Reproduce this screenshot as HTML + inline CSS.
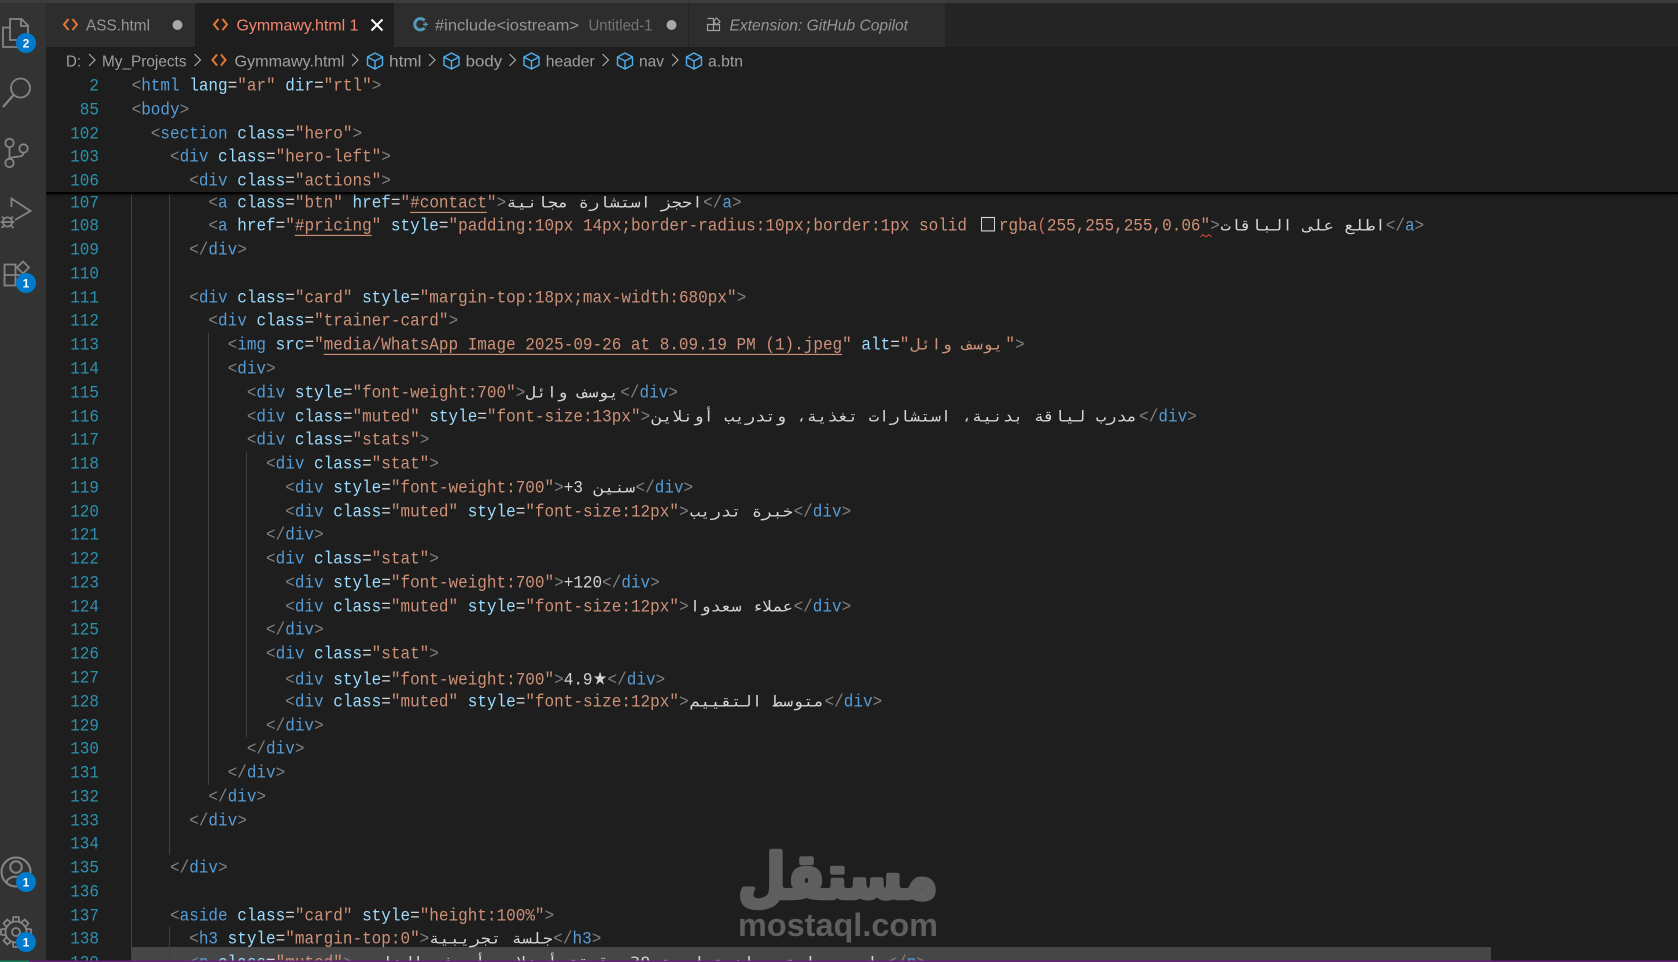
<!DOCTYPE html>
<html><head><meta charset="utf-8"><style>
html,body{margin:0;padding:0;background:#1e1e1e}
#app{position:relative;width:1678px;height:962px;overflow:hidden;background:#1e1e1e}
.l,.n{position:absolute;margin-top:1.6px;height:23.76px;line-height:23.76px;font:16px/23.76px "Liberation Mono","DejaVu Sans Mono",monospace;white-space:pre;transform:scaleY(1.12);transform-origin:50% 50%}
.l{left:131.6px;color:#d4d4d4}
.n{left:46px;width:53px;text-align:right;color:#2b91af}
.l i{font-style:normal;color:#569cd6}
.l b{font-weight:400;color:#9cdcfe}
.l s{text-decoration:none;color:#ce9178}
.l em{font-style:normal;color:#808080}
.l u{color:#ce9178;text-decoration:underline;text-decoration-thickness:1px;text-underline-offset:3.5px}
.ar{display:inline-block;direction:rtl;unicode-bidi:isolate;text-align:center;white-space:pre;font-family:"DejaVu Sans Mono","DejaVu Sans",sans-serif;font-size:13.5px;transform:scaleX(1.27)}
.star{display:inline-block;width:15px;text-align:center;font-family:"DejaVu Sans",sans-serif}
.g{position:absolute;width:1px;background:#404040}
#sticky{position:absolute;left:46px;top:47px;right:0;height:145px;background:#1e1e1e;border-bottom:2px solid #000;box-shadow:0 1px 2px #0008}
svg text{font-family:"Liberation Sans",sans-serif}
.swatch{display:inline-block;box-sizing:border-box;width:14px;height:13px;border:1px solid #d4d4d4;background:#262626;margin:0 3.7px 0 14.2px;vertical-align:-1px}
</style></head><body><div id="app">

<div style="position:absolute;left:131px;top:947px;width:1360px;height:15px;background:#464646"></div>
<div class="g" style="left:131px;top:193px;height:769px"></div>
<div class="g" style="left:169px;top:193px;height:662px"></div>
<div class="g" style="left:169px;top:927px;height:35px"></div>
<div class="g" style="left:208px;top:333px;height:452px"></div>
<div class="g" style="left:246px;top:452px;height:285px"></div>

<div class="n" style="top:190.1px">107</div><div class="l" style="top:190.1px">        <em>&lt;</em><i>a</i> <b>class</b>=<s>"btn"</s> <b>href</b>=<s>"<u>#contact</u>"</s><em>&gt;</em><span class="ar" style="width:197px">احجز استشارة مجانية</span><em>&lt;/</em><i>a</i><em>&gt;</em></div>
<div class="n" style="top:213.9px">108</div><div class="l" style="top:213.9px">        <em>&lt;</em><i>a</i> <b>href</b>=<s>"<u>#pricing</u>"</s> <b>style</b>=<s>"padding:10px 14px;border-radius:10px;border:1px solid</s><span class="swatch"></span><s>rgba</s><s style="color:#d16a5c">(</s><s>255,255,255,0.06"</s><em>&gt;</em><span class="ar" style="width:166px">اطلع على الباقات</span><em>&lt;/</em><i>a</i><em>&gt;</em></div>
<div class="n" style="top:237.6px">109</div><div class="l" style="top:237.6px">      <em>&lt;/</em><i>div</i><em>&gt;</em></div>
<div class="n" style="top:261.4px">110</div>
<div class="n" style="top:285.2px">111</div><div class="l" style="top:285.2px">      <em>&lt;</em><i>div</i> <b>class</b>=<s>"card"</s> <b>style</b>=<s>"margin-top:18px;max-width:680px"</s><em>&gt;</em></div>
<div class="n" style="top:308.9px">112</div><div class="l" style="top:308.9px">        <em>&lt;</em><i>div</i> <b>class</b>=<s>"trainer-card"</s><em>&gt;</em></div>
<div class="n" style="top:332.7px">113</div><div class="l" style="top:332.7px">          <em>&lt;</em><i>img</i> <b>src</b>=<s>"<u>media/WhatsApp Image 2025-09-26 at 8.09.19 PM (1).jpeg</u>"</s> <b>alt</b>=<s>"<span class="ar" style="width:96px">يوسف وائل</span>"</s><em>&gt;</em></div>
<div class="n" style="top:356.5px">114</div><div class="l" style="top:356.5px">          <em>&lt;</em><i>div</i><em>&gt;</em></div>
<div class="n" style="top:380.2px">115</div><div class="l" style="top:380.2px">            <em>&lt;</em><i>div</i> <b>style</b>=<s>"font-weight:700"</s><em>&gt;</em><span class="ar" style="width:95px">يوسف وائل</span><em>&lt;/</em><i>div</i><em>&gt;</em></div>
<div class="n" style="top:404px">116</div><div class="l" style="top:404px">            <em>&lt;</em><i>div</i> <b>class</b>=<s>"muted"</s> <b>style</b>=<s>"font-size:13px"</s><em>&gt;</em><span class="ar" style="width:489px">مدرب لياقة بدنية، استشارات تغذية، وتدريب أونلاين</span><em>&lt;/</em><i>div</i><em>&gt;</em></div>
<div class="n" style="top:427.8px">117</div><div class="l" style="top:427.8px">            <em>&lt;</em><i>div</i> <b>class</b>=<s>"stats"</s><em>&gt;</em></div>
<div class="n" style="top:451.5px">118</div><div class="l" style="top:451.5px">              <em>&lt;</em><i>div</i> <b>class</b>=<s>"stat"</s><em>&gt;</em></div>
<div class="n" style="top:475.3px">119</div><div class="l" style="top:475.3px">                <em>&lt;</em><i>div</i> <b>style</b>=<s>"font-weight:700"</s><em>&gt;</em>+3 <span class="ar" style="width:43px">سنين</span><em>&lt;/</em><i>div</i><em>&gt;</em></div>
<div class="n" style="top:499.1px">120</div><div class="l" style="top:499.1px">                <em>&lt;</em><i>div</i> <b>class</b>=<s>"muted"</s> <b>style</b>=<s>"font-size:12px"</s><em>&gt;</em><span class="ar" style="width:105px">خبرة تدريب</span><em>&lt;/</em><i>div</i><em>&gt;</em></div>
<div class="n" style="top:522.8px">121</div><div class="l" style="top:522.8px">              <em>&lt;/</em><i>div</i><em>&gt;</em></div>
<div class="n" style="top:546.6px">122</div><div class="l" style="top:546.6px">              <em>&lt;</em><i>div</i> <b>class</b>=<s>"stat"</s><em>&gt;</em></div>
<div class="n" style="top:570.4px">123</div><div class="l" style="top:570.4px">                <em>&lt;</em><i>div</i> <b>style</b>=<s>"font-weight:700"</s><em>&gt;</em>+120<em>&lt;/</em><i>div</i><em>&gt;</em></div>
<div class="n" style="top:594.1px">124</div><div class="l" style="top:594.1px">                <em>&lt;</em><i>div</i> <b>class</b>=<s>"muted"</s> <b>style</b>=<s>"font-size:12px"</s><em>&gt;</em><span class="ar" style="width:105px">عملاء سعدوا</span><em>&lt;/</em><i>div</i><em>&gt;</em></div>
<div class="n" style="top:617.9px">125</div><div class="l" style="top:617.9px">              <em>&lt;/</em><i>div</i><em>&gt;</em></div>
<div class="n" style="top:641.7px">126</div><div class="l" style="top:641.7px">              <em>&lt;</em><i>div</i> <b>class</b>=<s>"stat"</s><em>&gt;</em></div>
<div class="n" style="top:665.4px">127</div><div class="l" style="top:665.4px">                <em>&lt;</em><i>div</i> <b>style</b>=<s>"font-weight:700"</s><em>&gt;</em>4.9<span class="star">★</span><em>&lt;/</em><i>div</i><em>&gt;</em></div>
<div class="n" style="top:689.2px">128</div><div class="l" style="top:689.2px">                <em>&lt;</em><i>div</i> <b>class</b>=<s>"muted"</s> <b>style</b>=<s>"font-size:12px"</s><em>&gt;</em><span class="ar" style="width:136px">متوسط التقييم</span><em>&lt;/</em><i>div</i><em>&gt;</em></div>
<div class="n" style="top:713px">129</div><div class="l" style="top:713px">              <em>&lt;/</em><i>div</i><em>&gt;</em></div>
<div class="n" style="top:736.7px">130</div><div class="l" style="top:736.7px">            <em>&lt;/</em><i>div</i><em>&gt;</em></div>
<div class="n" style="top:760.5px">131</div><div class="l" style="top:760.5px">          <em>&lt;/</em><i>div</i><em>&gt;</em></div>
<div class="n" style="top:784.3px">132</div><div class="l" style="top:784.3px">        <em>&lt;/</em><i>div</i><em>&gt;</em></div>
<div class="n" style="top:808px">133</div><div class="l" style="top:808px">      <em>&lt;/</em><i>div</i><em>&gt;</em></div>
<div class="n" style="top:831.8px">134</div>
<div class="n" style="top:855.6px">135</div><div class="l" style="top:855.6px">    <em>&lt;/</em><i>div</i><em>&gt;</em></div>
<div class="n" style="top:879.3px">136</div>
<div class="n" style="top:903.1px">137</div><div class="l" style="top:903.1px">    <em>&lt;</em><i>aside</i> <b>class</b>=<s>"card"</s> <b>style</b>=<s>"height:100%"</s><em>&gt;</em></div>
<div class="n" style="top:926.9px">138</div><div class="l" style="top:926.9px">      <em>&lt;</em><i>h3</i> <b>style</b>=<s>"margin-top:0"</s><em>&gt;</em><span class="ar" style="width:124px">جلسة تجريبية</span><em>&lt;/</em><i>h3</i><em>&gt;</em></div>
<div class="n" style="top:950.6px">139</div><div class="l" style="top:950.6px">      <em>&lt;</em><i>p</i> <b>class</b>=<s>"muted"</s><em>&gt;</em><span class="ar" style="width:535px">احجز جلسة مجانية لمدة 30 دقيقة أونلاين أو في النادي</span><em>&lt;/</em><i>p</i><em>&gt;</em></div>

<div id="sticky"></div>
<div class="n" style="top:73.1px">2</div><div class="l" style="top:73.1px"><em>&lt;</em><i>html</i> <b>lang</b>=<s>"ar"</s> <b>dir</b>=<s>"rtl"</s><em>&gt;</em></div>
<div class="n" style="top:97.1px">85</div><div class="l" style="top:97.1px"><em>&lt;</em><i>body</i><em>&gt;</em></div>
<div class="n" style="top:121px">102</div><div class="l" style="top:121px">  <em>&lt;</em><i>section</i> <b>class</b>=<s>"hero"</s><em>&gt;</em></div>
<div class="n" style="top:144.1px">103</div><div class="l" style="top:144.1px">    <em>&lt;</em><i>div</i> <b>class</b>=<s>"hero-left"</s><em>&gt;</em></div>
<div class="n" style="top:168.1px">106</div><div class="l" style="top:168.1px">      <em>&lt;</em><i>div</i> <b>class</b>=<s>"actions"</s><em>&gt;</em></div>

<svg width="1678" height="962" viewBox="0 0 1678 962" style="position:absolute;left:0;top:0">
<defs>
<path id="code" d="M5 -5.5 L0.5 0 L5 5.5 M9 -5.5 L13.5 0 L9 5.5" fill="none" stroke="#e37933" stroke-width="2"/>
<path id="cube" d="M9 1 L16.5 5 V13 L9 17 L1.5 13 V5 Z M1.5 5 L9 9 L16.5 5 M9 9 V17" fill="none" stroke="#4fb0f0" stroke-width="1.4" stroke-linejoin="round"/>
<path id="chev" d="M0 -6 L6 0 L0 6" fill="none" stroke="#a8a8a8" stroke-width="1.2"/>
<path id="tooth" d="M-3.2 -10.5 L-2.6 -15 H2.6 L3.2 -10.5" fill="none" stroke="#858585" stroke-width="1.8"/>
</defs>

<!-- title strip + tabs -->
<rect x="0" y="0" width="1678" height="3" fill="#3c3c3c"/>
<rect x="46" y="3" width="1632" height="44" fill="#252526"/>
<rect x="46" y="3" width="149" height="44" fill="#2d2d2d"/>
<rect x="195" y="3" width="199" height="44" fill="#1e1e1e"/>
<rect x="394" y="3" width="294" height="44" fill="#2d2d2d"/>
<rect x="688" y="3" width="1" height="44" fill="#252526"/>
<rect x="689" y="3" width="256" height="44" fill="#2d2d2d"/>

<use href="#code" x="63.5" y="24.5"/>
<text x="86" y="30.5" font-size="16" fill="#969696" textLength="64" lengthAdjust="spacingAndGlyphs">ASS.html</text>
<circle cx="177.5" cy="25" r="5" fill="#a8a8a8"/>

<use href="#code" x="213.5" y="24.5"/>
<text x="236.5" y="30.5" font-size="16" fill="#f48771" textLength="122" lengthAdjust="spacingAndGlyphs">Gymmawy.html 1</text>
<path d="M371.5 19.5 L382.5 30.5 M382.5 19.5 L371.5 30.5" stroke="#fff" stroke-width="2"/>

<path d="M424.5 20.5 A5.6 5.6 0 1 0 424.5 28" fill="none" stroke="#519aba" stroke-width="3"/>
<path d="M423 24.3 H428 M425.5 22 V26.6" stroke="#519aba" stroke-width="1.4"/>
<text x="435" y="30.5" font-size="16" fill="#969696" textLength="144" lengthAdjust="spacingAndGlyphs">#include&lt;iostream&gt;</text>
<text x="588.5" y="30.5" font-size="15.5" fill="#757575" textLength="64" lengthAdjust="spacingAndGlyphs">Untitled-1</text>
<circle cx="671.5" cy="25" r="5" fill="#a8a8a8"/>

<path d="M707.5 24.5 H713.5 V30.5 H707.5 Z M707.5 18.5 H713.5 V24.5 M713.5 24.5 H719.5 V30.5 H713.5 M716.5 18 L720 21.5 L716.5 25 L713.5 21.5 Z" fill="none" stroke="#a0a0a0" stroke-width="1.2"/>
<text x="729.5" y="30.5" font-size="16" font-style="italic" fill="#969696" textLength="178.5" lengthAdjust="spacingAndGlyphs">Extension: GitHub Copilot</text>

<!-- breadcrumbs -->
<g font-size="16" fill="#a0a0a0">
<text x="66" y="66.5" textLength="15" lengthAdjust="spacingAndGlyphs">D:</text>
<text x="102" y="66.5" textLength="84.5" lengthAdjust="spacingAndGlyphs">My_Projects</text>
<text x="234.5" y="66.5" textLength="110" lengthAdjust="spacingAndGlyphs">Gymmawy.html</text>
<text x="389" y="66.5" textLength="32.5" lengthAdjust="spacingAndGlyphs">html</text>
<text x="465.7" y="66.5" textLength="36.5" lengthAdjust="spacingAndGlyphs">body</text>
<text x="545.7" y="66.5" textLength="49" lengthAdjust="spacingAndGlyphs">header</text>
<text x="639" y="66.5" textLength="25" lengthAdjust="spacingAndGlyphs">nav</text>
<text x="708" y="66.5" textLength="35" lengthAdjust="spacingAndGlyphs">a.btn</text>
</g>
<use href="#chev" x="89" y="60"/><use href="#chev" x="194.5" y="60"/><use href="#chev" x="352" y="60"/>
<use href="#chev" x="429" y="60"/><use href="#chev" x="509.5" y="60"/><use href="#chev" x="602.5" y="60"/><use href="#chev" x="672" y="60"/>
<use href="#code" x="212" y="60"/>
<use href="#cube" x="366" y="52"/><use href="#cube" x="442.5" y="52"/><use href="#cube" x="522.5" y="52"/><use href="#cube" x="616" y="52"/><use href="#cube" x="685" y="52"/>

<!-- squiggle -->
<path d="M1200.5 237 L1203 234.5 L1206 237 L1209 234.5 L1211.5 237" fill="none" stroke="#e2483d" stroke-width="1"/>

<!-- activity bar -->
<rect x="0" y="3" width="46" height="959" fill="#333333"/>
<g fill="none" stroke="#858585" stroke-width="1.8">
<path d="M10 19 H21.5 L28 25.5 V40 H10 Z M21 19 V26 H28"/>
<path d="M10 27.5 H3 V47 H21 V40"/>
<circle cx="20.5" cy="88" r="9.5"/><path d="M13.5 95 L3 107" stroke-width="2.2"/>
<circle cx="9.5" cy="143" r="4.2"/><circle cx="23.5" cy="148.5" r="4.2"/><circle cx="9.5" cy="163" r="4.2"/>
<path d="M9.5 147.5 V158.5 M23.5 153 C23 159 13 155 9.5 159"/>
<path d="M11.5 207 V198.5 L30.5 211 L15 220"/>
<circle cx="7.5" cy="222" r="4.6"/><path d="M2 216.5 L4 219 M13 216.5 L11 219 M0.5 222 H14.5 M1.5 228 L4 225.5 M13.5 228 L11 225.5"/>
<path d="M4.5 264.5 H15.5 V285.5 H4.5 Z M4.5 275 H26 V285.5 H15.5"/>
<path d="M23 261.5 L29 267.5 L23 273.5 L17 267.5 Z"/>
<circle cx="16" cy="872" r="14.5" stroke-width="2"/><circle cx="16" cy="867" r="5.8" stroke-width="2"/>
<path d="M6.5 883 C7 874.5 25 874.5 25.5 883" stroke-width="2"/>
<circle cx="16" cy="932" r="10.5"/><circle cx="16" cy="932" r="4"/>
</g>
<g transform="translate(16 932)">
<use href="#tooth"/><use href="#tooth" transform="rotate(45)"/><use href="#tooth" transform="rotate(90)"/><use href="#tooth" transform="rotate(135)"/><use href="#tooth" transform="rotate(180)"/><use href="#tooth" transform="rotate(225)"/><use href="#tooth" transform="rotate(270)"/><use href="#tooth" transform="rotate(315)"/>
</g>
<g fill="#007acc">
<circle cx="26" cy="43" r="10"/><circle cx="26" cy="283" r="10"/><circle cx="26" cy="882" r="10"/><circle cx="26" cy="942" r="10"/>
</g>
<g fill="#fff" font-size="12" font-weight="700" text-anchor="middle">
<text x="26" y="47.5">2</text><text x="26" y="287.5">1</text><text x="26" y="886.5">1</text><text x="26" y="946.5">1</text>
</g>

<!-- watermark -->
<g fill="#5f5f5f">
<text x="838" y="898" transform="translate(838 0) scale(0.88 1) translate(-838 0)" text-anchor="middle" font-size="62" font-weight="700" style="font-family:'DejaVu Sans',sans-serif" stroke="#5f5f5f" stroke-width="4.5" stroke-linejoin="round">مستقل</text>
<text x="738" y="936" font-size="32" font-weight="700" textLength="200" lengthAdjust="spacingAndGlyphs">mostaql.com</text>
</g>

<!-- status bar -->
<rect x="0" y="960.5" width="1678" height="1.5" fill="#68217a"/>
<rect x="0" y="960.5" width="29" height="1.5" fill="#16825d"/>
</svg>
</div></body></html>
